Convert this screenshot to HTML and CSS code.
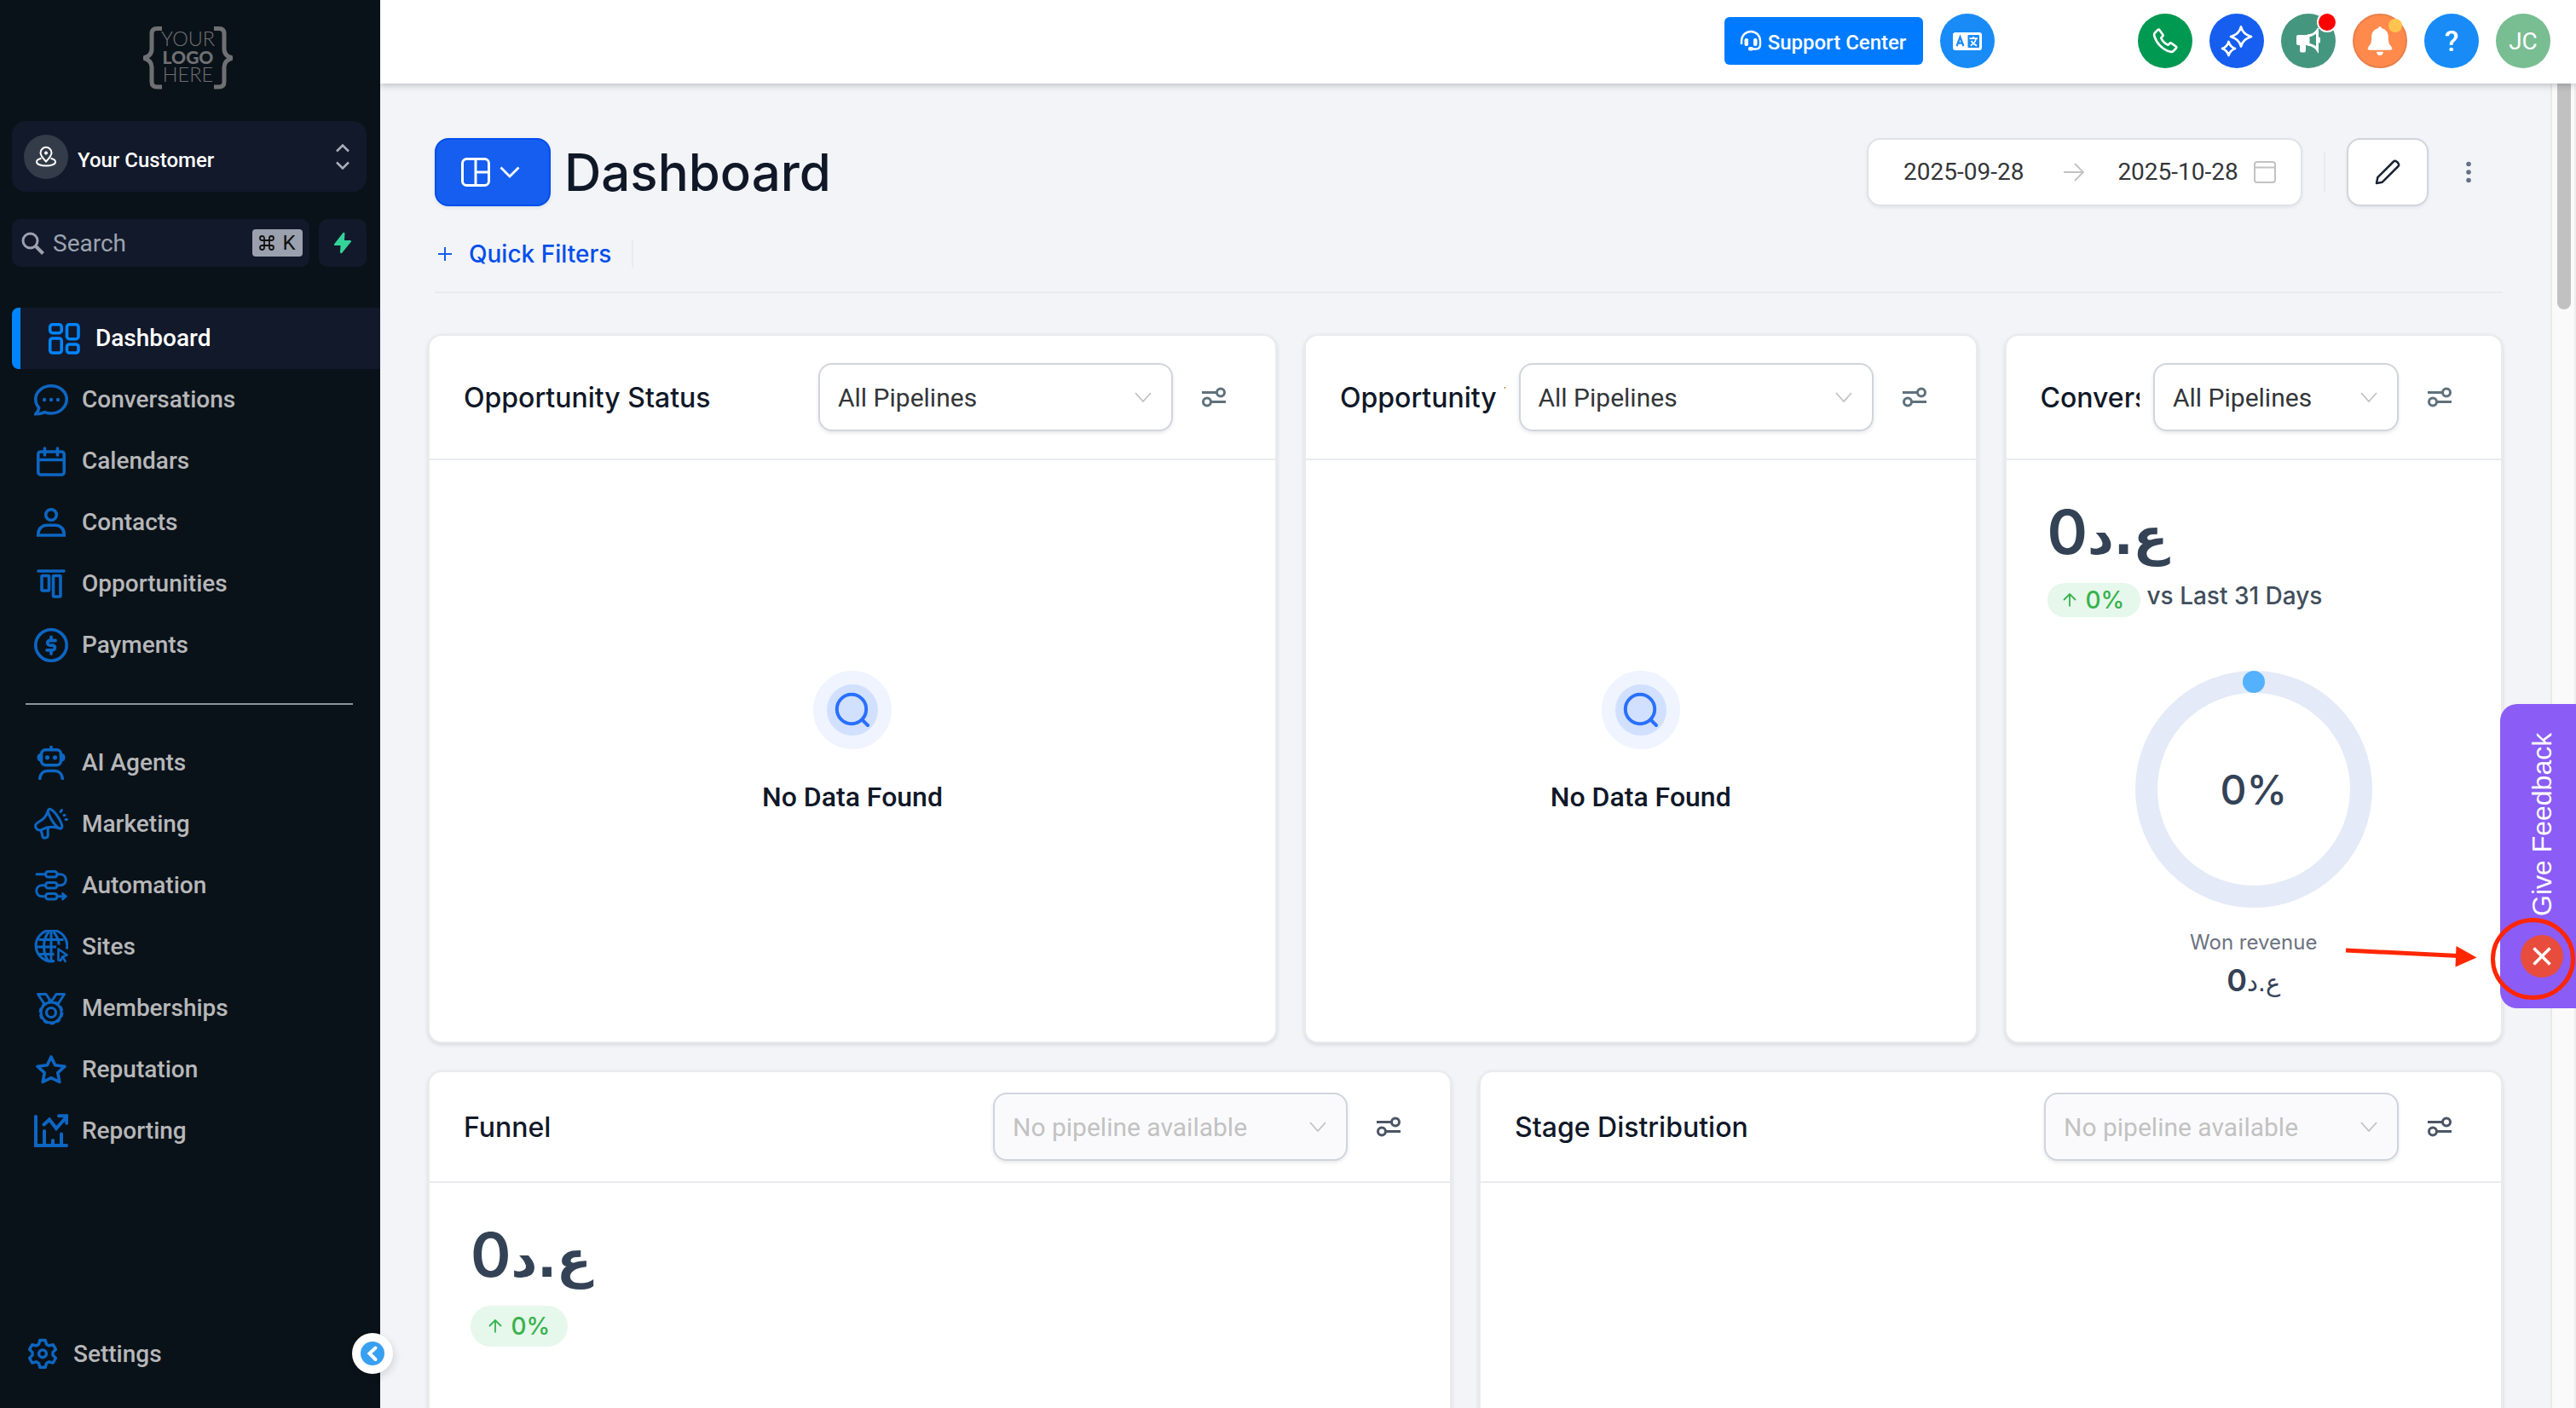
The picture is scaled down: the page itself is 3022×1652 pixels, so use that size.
FILE: index.html
```
<!DOCTYPE html>
<html lang="en">
<head>
    <meta charset="UTF-8">
    <meta name="viewport" content="width=device-width, initial-scale=1.0">
    <title>Dashboard</title>
    <link rel="stylesheet" href="styles.css">
</head>
<body>
    <svg class="Sprite" width="0" height="0">
        <symbol id="sliders" viewBox="0 0 28 24">
            <g fill="none" stroke="currentColor" stroke-width="3">
                <path d="M0 6.5h17M11 17.5h17"/><circle cx="22" cy="6.5" r="4.5"/><circle cx="6" cy="17.5" r="4.5"/>
            </g>
        </symbol>
        <symbol id="chev" viewBox="0 0 20 12">
            <path d="M1 1l9 10 9-10" fill="none" stroke="#c2c2c2" stroke-width="1.8"/>
        </symbol>
        <symbol id="up" viewBox="0 0 16 16">
            <path d="M8 15.5V1.2M1 8l7-7 7 7" fill="none" stroke="currentColor" stroke-width="1.8"/>
        </symbol>
    </svg>

    <aside class="Sidebar">
        <div class="Logo">
            <svg class="Brace" width="22" height="75" viewBox="0 0 22 75"><path d="M22 2.5h-6c-4 0-6 2-6 6v18c0 5-3 9-10 10.500 7 2 10 6 10 11v17c0 4 2 6 6 6h6" fill="none" stroke="#6f7073" stroke-width="5"/></svg>
            <div class="Logo-Text">
                <span>YOUR</span>
                <strong>LOGO</strong>
                <span>HERE</span>
            </div>
            <svg class="Brace" width="22" height="75" viewBox="0 0 22 75"><path d="M0 2.500h6c4 0 6 2 6 6v18c0 5 3 9 10 10.500-7 2-10 6-10 11v17c0 4-2 6-6 6h-6" fill="none" stroke="#6f7073" stroke-width="5"/></svg>
        </div>

        <div class="Account">
            <span class="Account-Avatar">
                <svg width="26" height="26" viewBox="0 0 26 26" fill="none" stroke="#fff" stroke-width="2"><path d="M13 18.500c-4-4-6.500-6.800-6.500-10.200a6.500 6.500 0 0 1 13 0c0 3.400-2.500 6.200-6.500 10.200z"/><circle cx="13" cy="8.500" r="1.600" fill="#fff" stroke-width="1"/><path d="M7.500 14.800C3.800 15.700 2 17.200 2 18.900c0 2.800 4.900 4.600 11 4.600s11-1.800 11-4.600c0-1.700-1.800-3.200-5.500-4.100"/></svg>
            </span>
            <span class="Account-Name">Your Customer</span>
            <svg width="16" height="32" viewBox="0 0 16 32" fill="none" stroke="#a9aeb8" stroke-width="2.500"><path d="M1 9.500l7-7 7 7M1 22.500l7 7 7-7"/></svg>
        </div>

        <div class="Search-Row">
            <div class="Search">
                <svg width="27" height="27" viewBox="0 0 27 27" fill="none" stroke="#9ca3af" stroke-width="3"><circle cx="10.500" cy="10.500" r="8.500"/><path d="M16.500 16.500l9 9" stroke-width="4"/></svg>
                <span class="Search-Label">Search</span>
                <span class="Kbd">
                    <svg width="18" height="18" viewBox="0 0 18 18" fill="none" stroke="#111" stroke-width="1.800"><path d="M6 6V3.500A2.500 2.500 0 1 0 3.500 6h11A2.500 2.500 0 1 0 12 3.500v11a2.500 2.500 0 1 0 2.500-2.500h-11A2.500 2.500 0 1 0 6 14.500z"/></svg>
                    K
                </span>
            </div>
            <div class="Bolt">
                <svg width="22" height="26" viewBox="0 0 22 26" fill="#34d399"><path d="M11.500 1L1 14.500q-.5 1.500 1 1.500h6.500L8 24.500q1 1 2 .5L21 11.500q.5-1.500-1-1.500h-7l.5-8.500q-1-1-2-.5z"/></svg>
            </div>
        </div>

        <nav class="Nav">
            <a class="Nav-Item Active">
                <svg width="40" height="40" viewBox="0 0 40 40"><rect x="3.700" y="3.700" width="13.500" height="10" rx="3"/><rect x="23.500" y="3.700" width="13.500" height="17" rx="3"/><rect x="3.700" y="20" width="13.500" height="17" rx="3"/><rect x="23.500" y="27" width="13.500" height="10" rx="3"/></svg>
                <span>Dashboard</span>
            </a>
            <a class="Nav-Item">
                <svg width="40" height="40" viewBox="0 0 40 40"><path d="M20 3.800c10.200 0 18.200 7 18.200 15.700S30.200 36 20 36c-3 0-5-.4-7.500-1.400-2.500 1.200-6 2.200-10.500 2.200 2-2.300 3.500-5 3.600-7.600C3 26.500 1.800 23 1.800 19.500 1.800 10.800 9.800 3.800 20 3.800z"/><g class="Solid"><circle cx="12" cy="20" r="2.200"/><circle cx="20" cy="20" r="2.200"/><circle cx="28" cy="20" r="2.200"/></g></svg>
                <span>Conversations</span>
            </a>
            <a class="Nav-Item">
                <svg width="40" height="40" viewBox="0 0 40 40"><rect x="4.800" y="9" width="30.400" height="27" rx="3"/><path d="M4.800 18.500h30.400M12.500 5v8M27.500 5v8" stroke-linecap="round"/></svg>
                <span>Calendars</span>
            </a>
            <a class="Nav-Item">
                <svg width="40" height="40" viewBox="0 0 40 40"><circle cx="20" cy="11" r="6.300"/><path d="M4.800 35v-1.500c0-6 4.500-10.300 10.500-10.300h9.400c6 0 10.500 4.300 10.500 10.300V35z"/></svg>
                <span>Contacts</span>
            </a>
            <a class="Nav-Item">
                <svg width="40" height="40" viewBox="0 0 40 40"><path d="M5 5h30" stroke-linecap="round"/><rect x="9" y="10.500" width="8.500" height="17.500" rx="1"/><rect x="22.500" y="10.500" width="8.500" height="24.500" rx="1"/></svg>
                <span>Opportunities</span>
            </a>
            <a class="Nav-Item">
                <svg width="40" height="40" viewBox="0 0 40 40"><circle cx="20" cy="20" r="18.200"/><path d="M25 14.500h-6.500a2.800 2.800 0 0 0 0 5.600h3a2.800 2.800 0 0 1 0 5.700H15M20 10.500v3M20 27v3" stroke-linecap="round" stroke-width="3.800"/></svg>
                <span>Payments</span>
            </a>
        </nav>

        <div class="Nav-Divider"></div>

        <nav class="Nav">
            <a class="Nav-Item">
                <svg width="40" height="40" viewBox="0 0 40 40"><rect x="8.500" y="4.800" width="23" height="18" rx="5"/><path d="M20 1.500v3" stroke-linecap="round"/><path d="M6.700 38.500c.5-5.500 4-9 9-9h8.600c5 0 8.500 3.500 9 9" stroke-linecap="round"/><g class="Solid"><circle cx="15.500" cy="13.800" r="2.600"/><circle cx="24.500" cy="13.800" r="2.600"/><path d="M8 9c-3 0-4.500 2-4.500 4.700S5 18.500 8 18.500zM32 9c3 0 4.500 2 4.500 4.700s-1.500 4.800-4.500 4.800z"/></g></svg>
                <span>AI Agents</span>
            </a>
            <a class="Nav-Item">
                <svg width="40" height="40" viewBox="0 0 40 40" stroke-linejoin="round"><path d="M17.500 2.500c2-1.200 7.500 3.500 11.500 10.500s5 11 2.500 12-7.500-4-11.200-10.500S15.500 3.700 17.500 2.500zM16.500 4c-2.500 7.500-5.500 10.500-12 14-3 1.600-3.500 4.200-2.200 6.500s4 3.500 7 1.800c6.500-3.800 13-4 21-1.300" stroke-width="3"/><path d="M8.200 27.500l2 7.500c.6 2 6 1.400 6-1.500v-8.500" stroke-width="3"/><path d="M31 5.500l1.500-2M35 9.500h1M37 14.500h1.500" stroke-width="3" stroke-linecap="round"/></svg>
                <span>Marketing</span>
            </a>
            <a class="Nav-Item">
                <svg width="40" height="40" viewBox="0 0 40 40" stroke-linecap="round"><rect x="13.500" y="3.500" width="13.500" height="6.500" rx="3" stroke-width="3"/><rect x="13.500" y="16.500" width="13.500" height="6.500" rx="3" stroke-width="3"/><rect x="13.500" y="29.500" width="13.500" height="6.500" rx="3" stroke-width="3"/><path d="M3 6.700h10.500M27 6.700h3.500c9 0 9 13 0 13H27M13.500 19.700H9.500c-9 0-9 13 0 13h4M27 32.700h10M33.500 29.500l3.500 3.200-3.500 3.300" stroke-width="3"/></svg>
                <span>Automation</span>
            </a>
            <a class="Nav-Item">
                <svg width="40" height="40" viewBox="0 0 40 40"><path d="M38.300 22.500A18.300 18.300 0 1 0 24 36.500M20 1.500v36M2 20h24M5.500 11.500h29M5.500 28.500h18" stroke-width="3"/><path d="M17.500 2c-8 9-8 26 0 35.500M22.500 2c4 4.500 6.300 10 6.700 15.500" stroke-width="3"/><path d="M28.500 22.500l10 7-5 2-2.500 4.500-2.500-.5zM34 32l3 6" stroke-width="2.600" stroke-linejoin="round"/></svg>
                <span>Sites</span>
            </a>
            <a class="Nav-Item">
                <svg width="40" height="40" viewBox="0 0 40 40"><path d="M12 15L4.500 3.500H14l6 9 6-9h9.500L28 15" stroke-linejoin="round" stroke-width="3"/><circle cx="20" cy="25" r="5.500" stroke-width="3.200"/><circle cx="20" cy="25" r="12" stroke-width="3"/><circle cx="20" cy="25" r="13.600" stroke-width="1.600" stroke-dasharray="5.500 3.040"/></svg>
                <span>Memberships</span>
            </a>
            <a class="Nav-Item">
                <svg width="40" height="40" viewBox="0 0 40 40"><path d="M20 5l4.700 9.800 11.300 1.400-8.200 7.500 2 10.800L20 29.700l-9.800 4.800 2-10.800L4 16.200l11.300-1.400z" stroke-linejoin="round"/></svg>
                <span>Reputation</span>
            </a>
            <a class="Nav-Item">
                <svg width="40" height="40" viewBox="0 0 40 40"><path d="M2 3v34h36M12 20v17M22 31v6M32 23.500V37M11.500 12.500l6.500-6L26 17 38 3.500M29 2.200h9.200v8.500" stroke-width="4" stroke-linecap="round"/></svg>
                <span>Reporting</span>
            </a>
        </nav>

        <div class="Settings">
            <svg width="34" height="36" viewBox="0 0 34 36" fill="none" stroke="#0d66c2" stroke-width="3.400" stroke-linejoin="round"><path d="M13.800 2.500h6.400l1.300 4.700 3 1.700 4.700-1.200 3.200 5.500-3.400 3.400v3.500l3.400 3.400-3.200 5.500-4.700-1.200-3 1.700-1.300 4.700h-6.400l-1.300-4.700-3-1.700-4.700 1.200-3.200-5.500L5 20.100v-3.500l-3.400-3.400 3.200-5.500 4.700 1.200 3-1.700z"/><circle cx="17" cy="18.300" r="4.400"/></svg>
            <span>Settings</span>
        </div>

        <button class="Collapse">
            <svg width="28" height="28" viewBox="0 0 28 28"><circle cx="14" cy="14" r="14" fill="#38a0f0"/><path d="M17.500 7.500L10.500 14l7 7" fill="none" stroke="#fff" stroke-width="4" stroke-linecap="round"/></svg>
        </button>
    </aside>

    <div class="Page">
        <header class="Topbar">
            <button class="Support">
                <svg width="26" height="26" viewBox="0 0 26 26" fill="none" stroke="#fff" stroke-width="2.400"><path d="M2 17v-4a11 11 0 0 1 22 0v4c0 3.500-2 5.500-5 5.500h-5"/><g fill="#fff" stroke="none"><rect x="5.500" y="10" width="4.500" height="9" rx="2"/><rect x="16" y="10" width="4.500" height="9" rx="2"/><rect x="10" y="20" width="6" height="4.500" rx="2"/></g></svg>
                <span>Support Center</span>
            </button>
            <span class="Round Translate">
                <svg width="34" height="21" viewBox="0 0 34 21"><rect width="34" height="21" rx="3" fill="#fff"/><rect x="17.500" y="3" width="13.500" height="15" rx="1" fill="#188bf6"/><path d="M4.600 16L8.500 5.500 12.400 16M6 12.600h5" fill="none" stroke="#188bf6" stroke-width="2.200"/><path d="M19.500 7.200h9.500M24.200 5v2M27 7.700c-.5 3.300-3 6-6.300 7.800M21.500 10c1.500 2.600 3.500 4.200 6.500 5.700" fill="none" stroke="#fff" stroke-width="1.700"/></svg>
            </span>
            <div class="Round-Group">
                <span class="Round Phone">
                    <svg width="30" height="30" viewBox="0 0 30 30" fill="none" stroke="#fff" stroke-width="2.600" stroke-linejoin="round"><path d="M3 5.500L6.500 2q1-.8 1.900.2l3.800 5.300q.8 1.100-.2 2.100l-1.800 1.900c1.500 3.500 4.800 6.800 8.300 8.300l1.900-1.800q1-1 2.100-.2l5.300 3.800q1 .9.200 1.900L24.500 27c-1 1-2.500 1-4 .6C12 25 5 18 2.400 9.500 2 8 2 6.500 3 5.500z"/></svg>
                </span>
                <span class="Round Ai">
                    <svg width="38" height="38" viewBox="0 0 38 38" fill="none" stroke="#fff" stroke-width="2.800" stroke-linejoin="round"><path d="M24 2.500c1.600 6.500 5 9.500 12 11.500-7 2-10.400 5-12 11.500-1.600-6.500-5-9.500-12-11.500 7-2 10.400-5 12-11.500zM9.500 20c1.200 4.500 3.200 6.500 7.500 8-4.300 1.500-6.300 3.500-7.500 8C8.300 31.500 6.300 29.500 2 28c4.300-1.500 6.300-3.500 7.500-8z"/></svg>
                </span>
                <span class="Round Announce">
                    <svg width="30" height="30" viewBox="0 0 30 30"><path d="M3 8h12v12H3q-2 0-2-2v-8q0-2 2-2zM5 18h7v8.500q0 2-2 2H7q-2 0-2-2z" fill="#fff"/><path d="M15 8.800c4.500-.5 8-2.500 10.500-6v22.400c-2.500-3.500-6-5.500-10.500-6z" fill="none" stroke="#fff" stroke-width="3"/><rect x="26" y="10.500" width="3" height="7" rx="1.500" fill="#fff"/></svg>
                    <i class="Dot Red"></i>
                </span>
                <span class="Round Bell">
                    <svg width="30" height="34" viewBox="0 0 30 34" fill="#fff"><path d="M15 0q2 0 2 2.300c5 1 7.800 4.700 7.800 10 0 6.500 1 8.700 3.700 11.700q2.300 3.800-1.500 3.800H3q-3.800 0-1.500-3.800c2.700-3 3.700-5.200 3.700-11.700 0-5.300 2.800-9 7.800-10Q13 0 15 0zM11 29.700h8q-.5 4.300-4 4.300t-4-4.300z"/></svg>
                    <i class="Dot Yellow"></i>
                </span>
                <span class="Round Help">?</span>
                <span class="Round Avatar">JC</span>
            </div>
        </header>

        <main class="Content">
            <div class="Title-Row">
                <button class="Layout-Button">
                    <svg width="34" height="34" viewBox="0 0 34 34" fill="none" stroke="#fff" stroke-width="3"><rect x="1.500" y="1.500" width="31" height="31" rx="5"/><path d="M17 1.500v31M17 17h15.500"/></svg>
                    <svg width="24" height="14" viewBox="0 0 24 14" fill="none" stroke="#fff" stroke-width="2.800"><path d="M1.500 1.500L12 12 22.500 1.500"/></svg>
                </button>
                <h1>Dashboard</h1>
                <div class="Date-Range">
                    <span>2025-09-28</span>
                    <svg class="Arrow" width="24" height="22" viewBox="0 0 24 22" fill="none" stroke="#c2c2c2" stroke-width="1.800"><path d="M0 11h23M13 1l10 10-10 10"/></svg>
                    <span>2025-10-28</span>
                    <svg class="Cal" width="26" height="26" viewBox="0 0 26 26" fill="none" stroke="#c2c2c2" stroke-width="2"><rect x="1" y="1" width="24" height="24" rx="3"/><path d="M1 7.500h24"/></svg>
                </div>
                <div class="V-Line"></div>
                <button class="Edit">
                    <svg width="30" height="30" viewBox="0 0 30 30" fill="none" stroke="#182433" stroke-width="2.500" stroke-linejoin="round"><path d="M2 28l1.300-6.800L22 2.500q1-1 2.500-.5c1.500.6 3 2.100 3.500 3.500q.5 1.500-.5 2.500L8.800 26.700z"/></svg>
                </button>
                <svg class="Kebab" width="6" height="26" viewBox="0 0 6 26" fill="#667085"><circle cx="3" cy="3.500" r="2.800"/><circle cx="3" cy="13" r="2.800"/><circle cx="3" cy="22.500" r="2.800"/></svg>
            </div>

            <div class="Filters">
                <svg width="16" height="16" viewBox="0 0 16 16" stroke="#155eef" stroke-width="2"><path d="M0 8h16M8 0v16"/></svg>
                <span>Quick Filters</span>
            </div>

            <section class="Row Row-Three">
                <article class="Card">
                    <div class="Card-Head">
                        <h2>Opportunity Status</h2>
                        <div class="Select"><span>All Pipelines</span><svg width="20" height="12"><use href="#chev"/></svg></div>
                        <svg class="Tune" width="28" height="24"><use href="#sliders"/></svg>
                    </div>
                    <div class="Empty">
                        <span class="Empty-Icon"><svg width="46" height="46" viewBox="0 0 46 46" fill="none" stroke="#2970ff" stroke-width="4" stroke-linecap="round"><circle cx="22" cy="22" r="17.200"/><path d="M34.500 34.500l6.500 6.500"/></svg></span>
                        <p>No Data Found</p>
                    </div>
                </article>
                <article class="Card">
                    <div class="Card-Head">
                        <h2>Opportunity Value</h2>
                        <div class="Select"><span>All Pipelines</span><svg width="20" height="12"><use href="#chev"/></svg></div>
                        <svg class="Tune" width="28" height="24"><use href="#sliders"/></svg>
                    </div>
                    <div class="Empty">
                        <span class="Empty-Icon"><svg width="46" height="46" viewBox="0 0 46 46" fill="none" stroke="#2970ff" stroke-width="4" stroke-linecap="round"><circle cx="22" cy="22" r="17.200"/><path d="M34.500 34.500l6.500 6.500"/></svg></span>
                        <p>No Data Found</p>
                    </div>
                </article>
                <article class="Card">
                    <div class="Card-Head">
                        <h2>Conversion Rate</h2>
                        <div class="Select Narrow"><span>All Pipelines</span><svg width="20" height="12"><use href="#chev"/></svg></div>
                        <svg class="Tune" width="28" height="24"><use href="#sliders"/></svg>
                    </div>
                    <div class="Stats">
                        <div class="Amount">0<span class="Currency">ع.د</span></div>
                        <div class="Change">
                            <span class="Badge"><svg width="16" height="16"><use href="#up"/></svg>0%</span>
                            <span class="Versus">vs Last 31 Days</span>
                        </div>
                        <div class="Donut"><i class="Donut-Dot"></i>0%</div>
                        <div class="Won">Won revenue</div>
                        <div class="Won-Value">0<span class="Currency">ع.د</span></div>
                    </div>
                </article>
            </section>

            <section class="Row Row-Two">
                <article class="Card">
                    <div class="Card-Head Short">
                        <h2>Funnel</h2>
                        <div class="Select Disabled"><span>No pipeline available</span><svg width="20" height="12"><use href="#chev"/></svg></div>
                        <svg class="Tune" width="28" height="24"><use href="#sliders"/></svg>
                    </div>
                    <div class="Stats Funnel-Stats">
                        <div class="Amount">0<span class="Currency">ع.د</span></div>
                        <span class="Badge Tall"><svg width="16" height="16"><use href="#up"/></svg>0%</span>
                    </div>
                </article>
                <article class="Card">
                    <div class="Card-Head Short">
                        <h2>Stage Distribution</h2>
                        <div class="Select Disabled"><span>No pipeline available</span><svg width="20" height="12"><use href="#chev"/></svg></div>
                        <svg class="Tune" width="28" height="24"><use href="#sliders"/></svg>
                    </div>
                </article>
            </section>
        </main>

        <div class="Scrollbar"><div class="Thumb"></div></div>
    </div>

    <div class="Feedback">
        <span class="Feedback-Text">Give Feedback</span>
        <span class="Feedback-Close"><svg width="24" height="24" viewBox="0 0 24 24" stroke="#fff" stroke-width="3.600"><path d="M2.500 2.500l19 19M21.500 2.500l-19 19"/></svg></span>
    </div>

    <!-- arrow and ring pointing at the close button -->
    <svg class="Callout" width="272" height="104" viewBox="0 0 272 104">
        <path d="M2 42l132 6.500" stroke="#ff2600" stroke-width="5"/>
        <path d="M131.500 37l24 13.500-25 11z" fill="#ff2600"/>
        <ellipse cx="221.500" cy="52" rx="47" ry="45.500" fill="none" stroke="#ff2600" stroke-width="5"/>
    </svg>
</body>
</html>
```
FILE: styles.css
```
*{
    box-sizing: border-box;
    padding: 0;
    margin: 0;
}
body{
    height: 100vh;
    display: flex;
    overflow: hidden;
    position: relative;
    background-color: #f2f4f7;
    font-family: Roboto, "Liberation Sans", sans-serif;
}
button{
    border: none;
    background: none;
    font-family: inherit;
}
.Sprite{
    position: absolute;
}

/* sidebar */
.Sidebar{
    position: relative;
    z-index: 2;
    flex: none;
    width: 446px;
    height: 100vh;
    background-color: #0a1219;
    display: flex;
    flex-direction: column;
}
.Logo{
    height: 142px;
    padding-top: 31px;
    display: flex;
    justify-content: center;
    margin-right: 5px;
}
.Logo-Text{
    width: 61px;
    padding-top: 4px;
    display: flex;
    flex-direction: column;
    align-items: center;
    font-family: Lato, sans-serif;
    color: #6f7073;
    line-height: 21px;
}
.Logo-Text span{
    font-size: 23.5px;
    font-weight: 300;
}
.Logo-Text strong{
    font-size: 21px;
    font-weight: 900;
}
.Account{
    margin: 0 16px 0 14px;
    height: 83px;
    padding: 0 20px 0 14px;
    border-radius: 16px;
    background-color: #12192b;
    display: flex;
    align-items: center;
}
.Account-Avatar{
    width: 52px;
    height: 52px;
    border-radius: 50%;
    background-color: #343c49;
    display: flex;
    align-items: center;
    justify-content: center;
}
.Account-Name{
    flex: 1;
    margin-left: 11px;
    padding-top: 8px;
    color: #fff;
    font-size: 24px;
    font-weight: 500;
}
.Search-Row{
    margin: 32px 16px 0 14px;
    height: 56px;
    display: flex;
    gap: 11px;
}
.Search{
    width: 349px;
    padding: 0 8px 0 11px;
    border-radius: 10px;
    background-color: #12192b;
    display: flex;
    align-items: center;
}
.Search-Label{
    flex: 1;
    margin-left: 10px;
    color: #9ca3af;
    font-size: 28px;
}
.Kbd{
    width: 59px;
    height: 32px;
    border-radius: 4px;
    background-color: #9aa0ad;
    color: #111;
    font-size: 24px;
    display: flex;
    align-items: center;
    justify-content: center;
    gap: 9px;
}
.Bolt{
    width: 56px;
    border-radius: 10px;
    background-color: #12192b;
    display: flex;
    align-items: center;
    justify-content: center;
}
.Search-Row + .Nav{
    margin-top: 48px;
}
.Nav-Item{
    height: 72px;
    padding-left: 40px;
    display: flex;
    align-items: center;
    gap: 16px;
    color: #b6b7b9;
    font-size: 28px;
    font-weight: 500;
    line-height: 32px;
}
.Nav-Item span{
    margin-top: -1px;
}
.Nav-Item svg{
    fill: none;
    stroke: #0d66c2;
    stroke-width: 3.6;
}
.Nav-Item svg .Solid{
    fill: #0d66c2;
    stroke: none;
}
.Nav-Item.Active{
    margin-left: 14px;
    padding-left: 31px;
    gap: 17px;
    border-left: 10px solid #0085ff;
    border-radius: 8px 0 0 8px;
    background-color: #12192b;
    color: #fff;
}
.Nav-Item.Active svg{
    stroke: #0085ff;
}
.Nav-Divider{
    height: 2px;
    margin: 32px 32px 32px 30px;
    background-color: #8b929d;
}
.Settings{
    position: absolute;
    left: 33px;
    top: 1560px;
    height: 56px;
    display: flex;
    align-items: center;
    gap: 19px;
    color: #b6b7b9;
    font-size: 28px;
    font-weight: 500;
}
.Collapse{
    position: absolute;
    left: 413px;
    top: 1564px;
    width: 48px;
    height: 48px;
    border-radius: 50%;
    background-color: #fff;
    box-shadow: 2px 4px 10px rgba(0, 0, 0, .12);
    display: flex;
    align-items: center;
    justify-content: center;
}

/* page */
.Page{
    flex: 1;
    position: relative;
    display: flex;
    flex-direction: column;
}
.Topbar{
    position: relative;
    z-index: 1;
    height: 98px;
    flex: none;
    padding: 0 30px 2px 0;
    background-color: #fff;
    box-shadow: 0 2px 8px rgba(16, 24, 40, .25);
    display: flex;
    align-items: center;
    justify-content: flex-end;
}
.Support{
    width: 233px;
    height: 56px;
    padding-right: 2px;
    border-radius: 6px;
    background-color: #007bff;
    color: #fff;
    font-size: 24px;
    font-weight: 500;
    display: flex;
    align-items: center;
    justify-content: center;
    gap: 7px;
}
.Support span{
    padding-top: 3px;
}
.Round{
    position: relative;
    width: 64px;
    height: 64px;
    border-radius: 50%;
    color: #fff;
    display: flex;
    align-items: center;
    justify-content: center;
}
.Round-Group{
    margin-left: 168px;
    display: flex;
    gap: 20px;
}
.Translate{
    margin-left: 20px;
    background-color: #188bf6;
}
.Phone{
    background-color: #009951;
}
.Ai{
    background-color: #155eef;
}
.Announce{
    background-color: #45967f;
}
.Bell{
    background-color: #ff8a4c;
    border: 2px solid #e87f4a;
}
.Help{
    background-color: #188bf6;
    font-size: 34px;
    font-weight: 500;
}
.Avatar{
    background-color: #79bd92;
    font-size: 28px;
}
.Dot{
    position: absolute;
    border-radius: 50%;
}
.Dot.Red{
    right: -2px;
    top: -2px;
    width: 24px;
    height: 24px;
    border: 2px solid #fff;
    background-color: #f00;
}
.Dot.Yellow{
    right: 4px;
    top: 4px;
    width: 16px;
    height: 16px;
    background-color: #ffc34f;
}

/* content */
.Content{
    width: 2546px;
    flex: 1;
    min-height: 0;
    padding: 64px 56px 0 56px;
    overflow: hidden;
}
.Title-Row{
    height: 80px;
    padding: 0 37px 0 8px;
    display: flex;
    align-items: center;
}
.Layout-Button{
    width: 136px;
    height: 80px;
    padding-right: 5px;
    border: 2px solid #004eeb;
    border-radius: 16px;
    background-color: #155eef;
    box-shadow: 0 2px 4px rgba(16, 24, 40, .08);
    display: flex;
    align-items: center;
    justify-content: center;
    gap: 11px;
}
h1{
    margin-left: 16px;
    flex: 1;
    font-family: Inter, sans-serif;
    font-size: 60px;
    font-weight: 500;
    line-height: 80px;
    color: #101828;
}
.Date-Range{
    width: 511px;
    height: 80px;
    padding: 0 29px 0 41px;
    border: 2px solid #dfe2e8;
    border-radius: 16px;
    background-color: #fff;
    box-shadow: 0 2px 4px rgba(16, 24, 40, .06);
    display: flex;
    align-items: center;
    font-size: 28px;
    line-height: 32px;
    color: #333639;
}
.Date-Range span{
    margin-top: -1px;
}
.Date-Range .Arrow{
    margin: 0 39px 0 47px;
}
.Date-Range .Cal{
    margin-left: auto;
}
.V-Line{
    width: 2px;
    height: 48px;
    margin: 0 25px;
    background-color: #e8eaee;
}
.Edit{
    width: 96px;
    height: 80px;
    border: 2px solid #d0d5dd;
    border-radius: 16px;
    background-color: #fff;
    box-shadow: 0 2px 4px rgba(16, 24, 40, .06);
    display: flex;
    align-items: center;
    justify-content: center;
}
.Kebab{
    margin-left: 44px;
}
.Filters{
    margin: 0 0 48px 8px;
    height: 102px;
    padding: 12px 4px 0;
    border-bottom: 2px solid #e9ebee;
    display: flex;
    align-items: center;
    gap: 20px;
    font-family: Inter, sans-serif;
    font-size: 28px;
    font-weight: 500;
    color: #004eeb;
}
.Filters::after{
    content: "";
    width: 2px;
    height: 32px;
    margin-left: 4px;
    background-color: #e9ebee;
}
.Row{
    display: grid;
    gap: 32px;
    margin-bottom: 32px;
}
.Row-Three{
    grid-template-columns: 996px 789.5px 584.5px;
    height: 832px;
}
.Row-Two{
    grid-template-columns: 1fr 1fr;
    height: 832px;
}
.Card{
    border: 2px solid #e9ebef;
    border-radius: 16px;
    background-color: #fff;
    box-shadow: 0 2px 5px rgba(16, 24, 40, .12);
    display: flex;
    flex-direction: column;
    min-width: 0;
}
.Card-Head{
    flex: none;
    height: 146px;
    padding: 0 58px 0 40px;
    border-bottom: 2px solid #e9ebef;
    display: flex;
    align-items: center;
}
.Card-Head.Short{
    height: 130px;
}
.Card-Head h2{
    flex: 1;
    min-width: 0;
    margin-right: 16px;
    overflow: hidden;
    white-space: nowrap;
    font-family: Inter, sans-serif;
    font-size: 32px;
    font-weight: 500;
    color: #101828;
}
.Select{
    flex: none;
    width: 416px;
    height: 80px;
    padding: 0 23px 0 21px;
    border: 2px solid #d0d5dd;
    border-radius: 16px;
    box-shadow: 0 2px 4px rgba(16, 24, 40, .1);
    display: flex;
    align-items: center;
    justify-content: space-between;
    font-size: 30px;
    color: #333639;
}
.Select.Narrow{
    width: 288px;
}
.Select.Disabled{
    background-color: #fafafc;
    color: #c2c2c2;
}
.Tune{
    margin-left: 34px;
    color: #5f717c;
}
.Short .Tune{
    color: #4b5565;
}
.Empty{
    flex: 1;
    padding-top: 247px;
    display: flex;
    flex-direction: column;
    align-items: center;
}
.Empty-Icon{
    width: 92px;
    height: 92px;
    border: 16px solid #eff4ff;
    border-radius: 50%;
    background-color: #d1e0ff;
    display: flex;
    align-items: center;
    justify-content: center;
}
.Empty p{
    margin-top: 36px;
    font-size: 32px;
    font-weight: 500;
    line-height: 40px;
    color: #101828;
}
.Stats{
    padding: 40px 48px 0;
    display: flex;
    flex-direction: column;
    font-family: Inter, sans-serif;
    color: #344256;
}
.Funnel-Stats{
    align-items: flex-start;
}
.Amount{
    height: 104px;
    line-height: 88px;
    font-size: 72px;
    font-weight: 600;
}
.Currency{
    font-family: "DejaVu Sans", sans-serif;
    line-height: 1;
}
.Amount .Currency{
    font-size: 60px;
    font-weight: 700;
}
.Change{
    display: flex;
    height: 42px;
}
.Badge{
    width: 109px;
    height: 40px;
    border-radius: 24px;
    background-color: #e6f7eb;
    color: #37b24d;
    font-size: 28px;
    font-weight: 500;
    display: flex;
    align-items: center;
    justify-content: center;
    gap: 11px;
}
.Badge.Tall{
    width: 114px;
    height: 48px;
}
.Versus{
    margin: -3px 0 0 8px;
    font-size: 28px;
    font-weight: 500;
    line-height: 37px;
    color: #414e5c;
}
.Donut{
    position: relative;
    align-self: center;
    width: 278px;
    height: 278px;
    margin-top: 61px;
    border: 26px solid #e4eaf7;
    border-radius: 50%;
    display: flex;
    align-items: center;
    justify-content: center;
    font-size: 48px;
    font-weight: 500;
}
.Donut-Dot{
    position: absolute;
    top: -26px;
    left: 100px;
    width: 26px;
    height: 26px;
    border-radius: 50%;
    background-color: #53b1fd;
}
.Won{
    margin-top: 25px;
    text-align: center;
    font-size: 24px;
    line-height: 32px;
    color: #6b7280;
}
.Won-Value{
    margin-top: 5px;
    text-align: center;
    font-size: 36px;
    font-weight: 600;
    line-height: 46px;
}
.Won-Value .Currency{
    font-size: 29px;
    font-weight: 400;
}
.Scrollbar{
    position: absolute;
    right: 0;
    top: 98px;
    bottom: 0;
    width: 30px;
    padding: 0 4px 0 6px;
    border-left: 2px solid #e8e8e8;
    border-right: 2px solid #ededed;
    background-color: #fafafa;
}
.Thumb{
    height: 265px;
    border-radius: 0 0 8px 8px;
    background-color: #c1c1c1;
}

/* feedback tab */
.Feedback{
    position: absolute;
    z-index: 3;
    right: 0;
    top: 826px;
    width: 89px;
    height: 357px;
    padding: 32px 0 0 9px;
    border-radius: 20px 0 0 20px;
    background-color: #8b5cf6;
    display: flex;
    flex-direction: column;
    align-items: center;
}
.Feedback-Text{
    height: 217px;
    margin-right: 1px;
    writing-mode: vertical-rl;
    transform: rotate(180deg);
    font-family: "Liberation Sans", Arial, sans-serif;
    font-size: 32px;
    line-height: 40px;
    color: #fff;
}
.Feedback-Close{
    width: 50px;
    height: 50px;
    margin-top: 22px;
    border-radius: 50%;
    background-color: #e74c3c;
    display: flex;
    align-items: center;
    justify-content: center;
}
.Callout{
    position: absolute;
    z-index: 4;
    left: 2750px;
    top: 1073px;
}
```
